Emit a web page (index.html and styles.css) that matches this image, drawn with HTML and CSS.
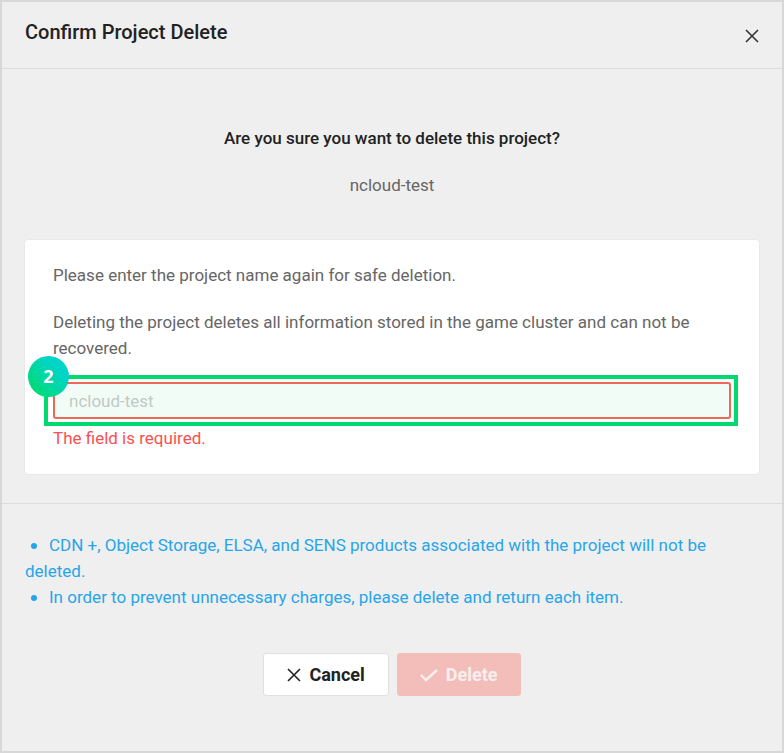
FILE: index.html
```html
<!DOCTYPE html>
<html lang="en">
<head>
<meta charset="utf-8">
<meta name="viewport" content="width=device-width, initial-scale=1">
<title>Confirm Project Delete</title>
<link rel="stylesheet" href="styles.css">
</head>
<body>
<main class="dialog">
  <header class="dialog-header">
    <h1 class="dialog-title">Confirm Project Delete</h1>
    <button class="close" type="button" aria-label="Close">
      <svg class="icon" viewBox="0 0 14 14" width="14" height="14" aria-hidden="true"><path d="M1 1l12 12M13 1L1 13"/></svg>
    </button>
  </header>
  <form class="dialog-form">
    <section class="dialog-body">
      <h2 class="question">Are you sure you want to delete this project?</h2>
      <p class="project">ncloud-test</p>
      <div class="card">
        <label class="line" for="project-name">Please enter the project name again for safe deletion.</label>
        <p class="line">Deleting the project deletes all information stored in the game cluster and can not be recovered.</p>
        <div class="field">
          <input class="input" id="project-name" type="text" placeholder="ncloud-test" aria-describedby="name-error">
          <div class="highlight"><span class="step">2</span></div>
        </div>
        <p class="error" id="name-error">The field is required.</p>
      </div>
    </section>
    <footer class="dialog-footer">
      <ul class="notes">
        <li>CDN +, Object Storage, ELSA, and SENS products associated with the project will not be deleted.</li>
        <li>In order to prevent unnecessary charges, please delete and return each item.</li>
      </ul>
      <div class="actions">
        <button class="button cancel" type="button">
          <svg class="icon" viewBox="0 0 14 14" width="14" height="14" aria-hidden="true"><path d="M1 1l12 12M13 1L1 13"/></svg>
          Cancel
        </button>
        <button class="button delete" type="submit" disabled>
          <svg class="icon check" viewBox="0 0 18 14" width="18" height="14" aria-hidden="true"><path d="M1 7l5 5L17 2"/></svg>
          Delete
        </button>
      </div>
    </footer>
  </form>
</main>
</body>
</html>
```
FILE: styles.css
```css
* {
  box-sizing: border-box;
}

body {
  margin: 0;
  background: #efefef;
  color: #666;
  font: 17px/26px Roboto, sans-serif;
}

h1, h2, p, ul {
  margin: 0;
  padding: 0;
}

button, input {
  font: inherit;
}

.dialog {
  min-height: 100vh;
  border: 2px solid #d8d8d8;
}

.dialog-header {
  display: flex;
  justify-content: space-between;
  align-items: flex-start;
  padding: 17px 23px 23px;
  border-bottom: 1px solid #dedede;
}

.dialog-title {
  color: #222;
  font-size: 20px;
  font-weight: 500;
}

.close {
  display: flex;
  margin-top: 10px;
  padding: 0;
  border: 0;
  background: none;
  color: #333;
}

.icon {
  fill: none;
  stroke: currentColor;
  stroke-width: 1.6;
}

.dialog-body {
  padding: 56px 22px 28px;
}

.question {
  color: #222;
  font-size: 17px;
  font-weight: 500;
  text-align: center;
}

.project {
  margin: 21px 0 41px;
  text-align: center;
}

.card {
  padding: 22px 28px 23px;
  border: 1px solid #e9e9e9;
  border-radius: 4px;
  background: #fff;
}

.line {
  display: block;
  margin-bottom: 21px;
}

.field {
  position: relative;
  margin-bottom: 6px;
}

.input {
  display: block;
  width: 100%;
  height: 37px;
  padding: 0 14px;
  border: 2px solid #ea6a55;
  border-radius: 3px;
  background: #f2fcf7;
  color: #666;
}

.input::placeholder {
  color: #c0cac5;
  opacity: 1;
}

.highlight {
  position: absolute;
  inset: -7px -7px -7px -9px;
  border: 4px solid #00d870;
  pointer-events: none;
}

.step {
  position: absolute;
  top: -23px;
  left: -20px;
  width: 41px;
  height: 41px;
  border-radius: 50%;
  background: linear-gradient(45deg, #00da70 10%, #00d5c8 70%);
  color: #fff;
  font: bold 18px/41px "Open Sans", sans-serif;
  text-align: center;
}

.error {
  color: #fb5050;
}

.dialog-footer {
  padding: 28px 23px;
  border-top: 1px solid #dedede;
}

.notes {
  color: #27a5ea;
  list-style: none;
}

.notes li::before {
  content: "";
  display: inline-block;
  width: 6px;
  height: 6px;
  margin: 0 12px 2px 6px;
  border-radius: 50%;
  background: currentColor;
}

.actions {
  display: flex;
  justify-content: center;
  gap: 8px;
  margin-top: 43px;
}

.button {
  display: flex;
  align-items: center;
  gap: 8px;
  height: 43px;
  padding: 0 23px;
  border: 1px solid #e0e0e0;
  border-radius: 3px;
  font-size: 18px;
  font-weight: 700;
}

.cancel {
  background: #fff;
  color: #222;
}

.delete {
  padding: 0 22px;
  border-color: #f3beb9;
  background: #f3beb9;
  color: #f7efee;
}

.check {
  stroke-width: 2.4;
}
```
